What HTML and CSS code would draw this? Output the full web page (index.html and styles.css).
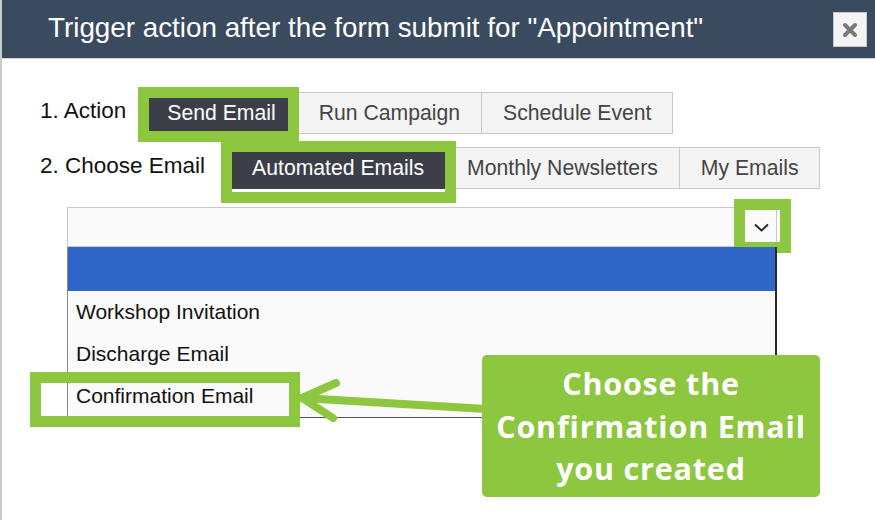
FILE: index.html
```html
<!DOCTYPE html>
<html>
<head>
<meta charset="utf-8">
<link rel="stylesheet" href="styles.css">
</head>
<body>
<div class="modal">
  <div class="header">
    <h1 class="title">Trigger action after the form submit for "Appointment"</h1>
    <button class="close" aria-label="close">
      <svg width="16" height="16" viewBox="0 0 16 16"><path d="M3 3 L13 13 M13 3 L3 13" stroke="#7a7a7a" stroke-width="4" stroke-linecap="round"/></svg>
    </button>
  </div>
  <div class="content">
    <div class="row">
      <div class="label">1. Action</div>
      <div class="group group-1">
        <span class="btn active hl hl-send">Send Email</span>
        <span class="btn">Run Campaign</span>
        <span class="btn">Schedule Event</span>
      </div>
    </div>
    <div class="row row-2">
      <div class="label">2. Choose Email</div>
      <div class="group group-2">
        <span class="btn active hl hl-auto">Automated Emails</span>
        <span class="btn">Monthly Newsletters</span>
        <span class="btn">My Emails</span>
      </div>
    </div>
    <div class="select">
      <svg class="chev" width="15" height="9" viewBox="0 0 15 9"><path d="M1 1.5 L7.5 7.5 L14 1.5" fill="none" stroke="#222" stroke-width="1.8"/></svg>
      <span class="chev-frame"></span>
    </div>
    <ul class="list">
      <li class="item selected"></li>
      <li class="item">Workshop Invitation</li>
      <li class="item">Discharge Email</li>
      <li class="item">Confirmation Email</li>
      <li class="conf-frame"></li>
    </ul>
  </div>
  <svg class="arrow" width="875" height="520" viewBox="0 0 875 520">
    <g stroke="#8dc63f" stroke-width="8" stroke-linecap="round" fill="none">
      <path d="M302 398 L486 409"/>
      <path d="M336 383 L302 398 L333 418" stroke-linejoin="round"/>
    </g>
  </svg>
  <div class="callout">Choose the<br>Confirmation Email<br>you created</div>
</div>
</body>
</html>
```

FILE: styles.css
```css
*, *::before, *::after { box-sizing: border-box; }
html, body { margin: 0; padding: 0; background: #fff; }
body { font-family: "Liberation Sans", Arial, sans-serif; width: 875px; height: 520px; overflow: hidden; }

.modal {
  position: relative;
  width: 875px;
  height: 520px;
  border-left: 2px solid #cacaca;
}

.header {
  height: 59px;
  background: #3a4a5f;
  border-bottom: 1px solid #d4d4d4;
  display: flex;
  align-items: center;
  justify-content: space-between;
  padding: 0 8px 0 46px;
}
.title {
  margin: 0;
  font-weight: normal;
  font-size: 27.8px;
  color: #fff;
  padding-bottom: 2px;
  white-space: nowrap;
}
.close {
  width: 34px;
  height: 35px;
  margin-top: 1px;
  background: #f4f4f4;
  border: 1px solid #c8c8c8;
  padding: 0;
  display: flex;
  align-items: center;
  justify-content: center;
}

.content {
  padding: 33px 0 0 38px;
}

.row {
  display: flex;
  align-items: flex-start;
}
.row-2 { margin-top: 13px; }

.label {
  font-size: 22.5px;
  color: #111;
  padding-top: 6px;
  flex: none;
}

.group { display: flex; }
.group-1 { margin-left: 19px; }
.group-2 { margin-left: 25px; }

.btn {
  display: block;
  position: relative;
  font-size: 21.2px;
  line-height: 24px;
  padding: 8px 21px;
  border: 1px solid #c8c8c8;
  background: #f4f4f4;
  color: #444;
  white-space: nowrap;
}
.btn + .btn { margin-left: -1px; }
.btn.active {
  background: #3d3f48;
  color: #fff;
  border-color: #3d3f48;
}

.hl::after {
  content: "";
  position: absolute;
  border: 11px solid #8dc63f;
  z-index: 2;
}
.hl-send::after { left: -8px; top: -6px; width: 161px; height: 55px; }
.hl-auto::after { left: -10px; top: -7px; width: 235px; height: 62px; }

.select {
  position: relative;
  margin: 18px 0 0 27px;
  width: 710px;
  height: 40px;
  border: 1px solid #c8c8c8;
  background: #fafafa;
  display: flex;
  align-items: center;
  justify-content: flex-end;
  padding-right: 7px;
}
.chev { display: block; }
.chev-frame {
  position: absolute;
  left: 666px;
  top: -9px;
  width: 57px;
  height: 54px;
  border: 11px solid #8dc63f;
}

.list {
  position: relative;
  list-style: none;
  margin: 0 0 0 27px;
  padding: 0;
  width: 710px;
  background: #fafafa;
  border-left: 1px solid #8a8a8a;
  border-right: 2px solid #2a2a2a;
  border-bottom: 1px solid #555;
}
.item {
  height: 42px;
  line-height: 42px;
  font-size: 21px;
  color: #111;
  padding-left: 8px;
}
.item.selected {
  height: 44px;
  background: #3166c9;
}
.conf-frame {
  position: absolute;
  left: -38px;
  top: 125px;
  width: 270px;
  height: 55px;
  border: 11px solid #8dc63f;
}

.arrow {
  position: absolute;
  left: -2px;
  top: 0;
  pointer-events: none;
}

.callout {
  position: absolute;
  left: 480px;
  top: 355px;
  width: 338px;
  height: 142px;
  background: #8dc63f;
  border-radius: 5px;
  color: #fff;
  font-family: "Open Sans", sans-serif;
  font-weight: bold;
  font-size: 30.5px;
  letter-spacing: 0.8px;
  line-height: 42.5px;
  text-align: center;
  padding-top: 7px;
}
```
